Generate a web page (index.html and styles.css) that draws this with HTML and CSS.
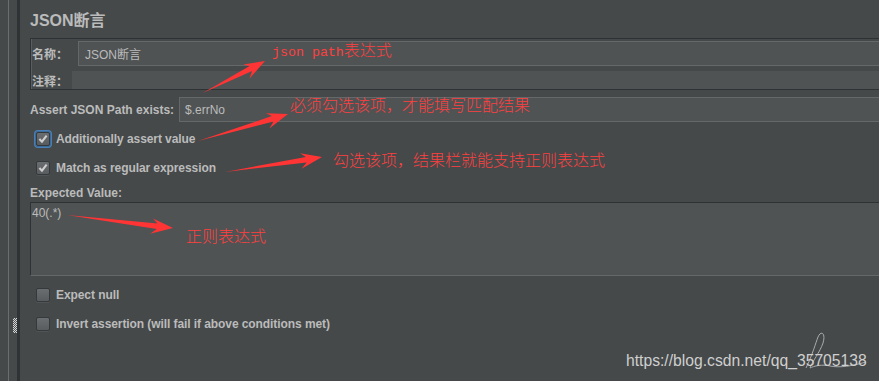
FILE: index.html
```html
<!DOCTYPE html>
<html lang="zh-CN">
<head>
  <meta charset="UTF-8">
  <meta name="viewport" content="width=device-width, initial-scale=1.0">
  <title>JSON断言</title>
  <link rel="stylesheet" href="styles.css">
</head>
<body>
  <div class="window">
    <div class="gutter"><span class="grip"></span></div>

    <div class="panel">
      <h1 class="title">JSON断言</h1>

      <div class="group">
        <div class="row name-row">
          <label class="label name-label">名称：</label>
          <div class="field">JSON断言</div>
        </div>
        <div class="row comment-row">
          <label class="label comment-label">注释：</label>
          <div class="field flat"></div>
        </div>
      </div>

      <div class="row path-row">
        <label class="label path-label">Assert JSON Path exists:</label>
        <div class="field">$.errNo</div>
      </div>

      <div class="check">
        <span class="box checked focus"><svg viewBox="0 0 14 14"><path d="M2.8 7 L5.8 10.2 L11.2 3.2" /></svg></span>
        <span class="label">Additionally assert value</span>
      </div>
      <div class="check">
        <span class="box checked"><svg viewBox="0 0 14 14"><path d="M2.8 7 L5.8 10.2 L11.2 3.2" /></svg></span>
        <span class="label">Match as regular expression</span>
      </div>

      <div class="label value-label">Expected Value:</div>
      <div class="textarea">40(.*)</div>

      <div class="check lower">
        <span class="box"></span>
        <span class="label">Expect null</span>
      </div>
      <div class="check">
        <span class="box"></span>
        <span class="label">Invert assertion (will fail if above conditions met)</span>
      </div>
    </div>

    <!-- red notes drawn over the screenshot -->
    <svg class="notes" width="879" height="381" viewBox="0 0 879 381">
      <g fill="#ff3434">
        <polygon transform="translate(265 61) rotate(-27.3)" points="0,0 -21,-7 -16,-2.6 -70,0 -16,3 -22,8.5" />
        <polygon transform="translate(288 114) rotate(-16.7)" points="0,0 -21,-7 -16,-2.6 -94,0 -16,3 -22,8.5" />
        <polygon transform="translate(322 157) rotate(-8.8)" points="0,0 -21,-7 -16,-2.6 -98,0 -16,3 -22,8.5" />
        <polygon transform="translate(173 228) rotate(7)" points="0,0 -21,-7 -16,-2.6 -107,0 -16,3 -22,8.5" />
      </g>
      <g class="note-text">
        <text x="272" y="55.5"><tspan class="mono">json path</tspan>表达式</text>
        <text x="290" y="110.5">必须勾选该项，才能填写匹配结果</text>
        <text x="333" y="165.5">勾选该项，结果栏就能支持正则表达式</text>
        <text x="186" y="242">正则表达式</text>
      </g>
      <path class="sign" d="M806 368 C 812 356, 816 342, 818 337 C 821 330, 826 333, 823 343 C 820 352, 812 362, 810 368 C 814 366, 822 364, 830 366 C 840 368, 852 366, 866 362" />
    </svg>

    <div class="watermark">https://blog.csdn.net/qq_35705138</div>
  </div>
</body>
</html>
```

FILE: styles.css
```css
body {
  margin: 0;
  padding: 0;
  width: 879px;
  height: 381px;
  overflow: hidden;
  background-color: #45494a;
  font-family: "Liberation Sans", Arial, "Noto Sans CJK SC", sans-serif;
  color: #bbbbbb;
}
.window {
  position: relative;
  display: flex;
  width: 879px;
  height: 381px;
}
.gutter {
  flex: none;
  width: 20px;
  display: flex;
  flex-direction: column;
  background: linear-gradient(to right, #45494a 0 8px, #6b6e70 8px 9px, #45494a 9px 17px, #303335 17px 20px);
}
.grip {
  width: 4px;
  height: 15px;
  margin: 318px 0 0 13px;
  background: repeating-conic-gradient(#d6d6d6 0 25%, #55595b 0 50%) 0 0 / 2px 2px;
}
.panel {
  flex: 1;
  display: flex;
  flex-direction: column;
  padding-left: 10px;
  margin-right: -30px;
}
.title {
  margin: 11px 0 0;
  font-size: 16px;
  line-height: 20px;
  font-weight: bold;
  color: #bbbbbb;
}
.label {
  font-size: 12px;
  font-weight: bold;
  color: #bbbbbb;
  white-space: nowrap;
}
.row {
  display: flex;
  align-items: center;
}
.field {
  flex: 1;
  box-sizing: border-box;
  height: 100%;
  display: flex;
  align-items: center;
  padding-left: 6px;
  background-color: #4f5354;
  border: 1px solid #646869;
  font-size: 12px;
  color: #bbbbbb;
}
.field.flat {
  border: none;
}
.group {
  margin-top: 7px;
  padding: 2px 0 0 1px;
  border: 1px solid #2f3234;
  box-shadow: inset 1px 0 0 #5a5e60;
}
.name-row {
  height: 25px;
}
.comment-row {
  height: 18px;
  margin-top: 5px;
}
.name-label {
  width: 46px;
}
.comment-label {
  width: 40px;
}
.path-row {
  height: 25px;
  margin-top: 7px;
}
.path-label {
  width: 149px;
}
.path-row .field {
  padding-left: 5px;
}
.check {
  height: 29px;
  display: flex;
  align-items: center;
  gap: 6px;
  padding-left: 6px;
}
.check .label {
  letter-spacing: -0.08px;
}
.path-row + .check {
  margin-top: 2px;
}
.check.lower {
  margin-top: 4px;
}
.box {
  box-sizing: border-box;
  width: 14px;
  height: 14px;
  border: 1px solid #36393b;
  border-radius: 2px;
  background: linear-gradient(#6b6e70, #595c5e);
  box-shadow: 0 1px 0 #505456;
}
.box svg {
  display: block;
  width: 12px;
  height: 12px;
}
.box path {
  fill: none;
  stroke: #d0d0d0;
  stroke-width: 2.4;
}
.box.focus {
  box-shadow: 0 0 0 1px #3c6a99, 0 0 0 2px #4a7fb5;
}
.value-label {
  height: 18px;
  line-height: 18px;
  margin-top: 2px;
}
.textarea {
  box-sizing: border-box;
  height: 74px;
  padding: 3px 0 0 1px;
  background-color: #4f5354;
  border: 1px solid #2f3234;
  border-bottom-color: #656869;
  font-size: 12px;
  line-height: 15px;
  color: #bbbbbb;
}
.notes {
  position: absolute;
  top: 0;
  left: 0;
  pointer-events: none;
}
.note-text {
  fill: #ff4040;
  font-family: "Noto Sans CJK SC", sans-serif;
  font-size: 16px;
  font-weight: 300;
}
.note-text .mono {
  font-family: "Liberation Mono", monospace;
  font-size: 13.3px;
  font-weight: normal;
}
.sign {
  fill: none;
  stroke: #a9abac;
  stroke-width: 1;
}
.watermark {
  position: absolute;
  left: 626px;
  top: 352px;
  font-size: 15.7px;
  line-height: 18px;
  color: #cfcfcf;
  white-space: nowrap;
}
```
